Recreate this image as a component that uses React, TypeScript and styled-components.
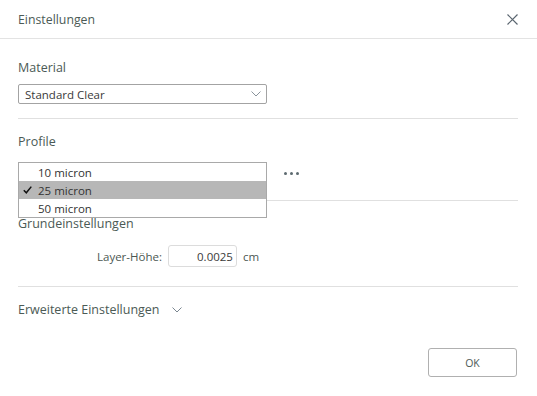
import React, { useState } from 'react';
import styled, { createGlobalStyle } from 'styled-components';

const GlobalStyle = createGlobalStyle`
    html, body {
        margin: 0;
        padding: 0;
        background: #fff;
    }
    body {
        font-family: "Open Sans", "Noto Sans", sans-serif;
        color: #4a5752;
    }
`;

const Dialog = styled.div`
    width: 537px;
    height: 396px;
    background: #fff;
    display: flex;
    flex-direction: column;
`;

const Header = styled.div`
    height: 38px;
    display: flex;
    align-items: center;
    justify-content: space-between;
    padding: 0 18px;
    border-bottom: 1px solid #e3e3e3;
`;

const Title = styled.div`
    font-size: 12.3px;
    color: #4b5a55;
`;

const CloseButton = styled.button`
    border: 0;
    background: none;
    padding: 0;
    width: 14px;
    height: 14px;
    display: flex;
    align-items: center;
    justify-content: center;
    cursor: pointer;
`;

const Body = styled.div`
    padding: 0 19px 0 18px;
    display: flex;
    flex-direction: column;
`;

const Section = styled.div<{ $top: number; $bottom: number; $last?: boolean }>`
    padding-top: ${p => p.$top}px;
    padding-bottom: ${p => p.$bottom}px;
    border-bottom: ${p => (p.$last ? 'none' : '1px solid #e0e0e0')};
`;

const Label = styled.div<{ $gap?: number }>`
    font-size: 12.5px;
    line-height: 16px;
    color: #4b5a55;
    margin-bottom: ${p => p.$gap ?? 0}px;
`;

const SelectRow = styled.div`
    display: flex;
    align-items: center;
    gap: 16px;
    position: relative;
`;

const SelectBox = styled.div`
    width: 249px;
    height: 20px;
    box-sizing: border-box;
    border: 1px solid #a3a3a3;
    border-radius: 2px;
    display: flex;
    align-items: center;
    justify-content: space-between;
    padding: 0 5px 0 6px;
    font-size: 11.5px;
    color: #3a3a3a;
`;

const Dots = styled.div`
    display: flex;
    gap: 3px;
    padding-left: 1px;

    span {
        width: 3px;
        height: 3px;
        border-radius: 50%;
        background: #5d6a70;
    }
`;

const Popup = styled.ul`
    position: absolute;
    left: 0;
    top: -1px;
    width: 249px;
    box-sizing: border-box;
    margin: 0;
    padding: 0;
    list-style: none;
    background: #fff;
    border: 1px solid #a9a9a9;
    z-index: 2;
`;

const Option = styled.li<{ $selected?: boolean }>`
    height: 18px;
    display: flex;
    align-items: center;
    position: relative;
    padding-left: 19px;
    font-size: 11.5px;
    color: #333;
    background: ${p => (p.$selected ? '#b7b7b7' : 'transparent')};
`;

const Check = styled.svg`
    position: absolute;
    left: 4px;
    top: 5px;
`;

const FieldRow = styled.div`
    display: flex;
    align-items: center;
    padding-left: 79px;
    gap: 6px;
`;

const FieldLabel = styled.span`
    font-size: 11.5px;
    color: #4b5752;
`;

const NumberInput = styled.div`
    width: 69px;
    height: 22px;
    box-sizing: border-box;
    border: 1px solid #dcdcdc;
    border-radius: 3px;
    display: flex;
    align-items: center;
    justify-content: flex-end;
    padding-right: 3px;
    font-size: 11.5px;
    color: #3a3a3a;
`;

const Unit = styled.span`
    font-size: 11.5px;
    color: #4b5752;
`;

const Toggle = styled.div`
    display: flex;
    align-items: center;
    gap: 12px;
    font-size: 12.5px;
    line-height: 16px;
    color: #4b5a55;
`;

const Footer = styled.div`
    display: flex;
    justify-content: flex-end;
    padding: 30px 20px 0 0;
`;

const OkButton = styled.button`
    width: 89px;
    height: 29px;
    border: 1px solid #b0b0b0;
    border-radius: 3px;
    background: #fff;
    font-family: "Open Sans", "Noto Sans", sans-serif;
    font-size: 10.5px;
    color: #4b5a55;
    cursor: pointer;
`;

const Chevron = ({ color = '#7a8690' }: { color?: string }) => (
    <svg width="10" height="6" viewBox="0 0 10 6">
        <path d="M0.5 0.5 L5 5 L9.5 0.5" fill="none" stroke={color} strokeWidth="1" />
    </svg>
);

const profiles = ['10 micron', '25 micron', '50 micron'];

const App: React.FC = () => {
    const [profile] = useState<string>('25 micron');
    const [open] = useState<boolean>(true);

    return (
        <Dialog>
            <GlobalStyle />
            <Header>
                <Title>Einstellungen</Title>
                <CloseButton aria-label="Schließen">
                    <svg width="11" height="11" viewBox="0 0 11 11">
                        <path d="M0.5 0.5 L10.5 10.5 M10.5 0.5 L0.5 10.5" stroke="#5b6670" strokeWidth="1.2" />
                    </svg>
                </CloseButton>
            </Header>

            <Body>
                <Section $top={21} $bottom={14}>
                    <Label $gap={8}>Material</Label>
                    <SelectBox>
                        <span>Standard Clear</span>
                        <Chevron color="#8a949c" />
                    </SelectBox>
                </Section>

                <Section $top={15} $bottom={17}>
                    <Label $gap={13}>Profile</Label>
                    <SelectRow>
                        {/* the open list covers the closed select */}
                        <SelectBox>{!open && <span>{profile}</span>}</SelectBox>
                        <Dots><span /><span /><span /></Dots>
                        {open && (
                            <Popup>
                                {profiles.map(p => (
                                    <Option key={p} $selected={p === profile}>
                                        {p === profile && (
                                            <Check width="9" height="8" viewBox="0 0 9 8">
                                                <path d="M0.8 4.2 L3.3 6.8 L8.3 0.6" fill="none" stroke="#111" strokeWidth="1.5" />
                                            </Check>
                                        )}
                                        {p}
                                    </Option>
                                ))}
                            </Popup>
                        )}
                    </SelectRow>
                </Section>

                <Section $top={15} $bottom={19}>
                    <Label $gap={13}>Grundeinstellungen</Label>
                    <FieldRow>
                        <FieldLabel>Layer-Höhe:</FieldLabel>
                        <NumberInput>0.0025</NumberInput>
                        <Unit>cm</Unit>
                    </FieldRow>
                </Section>

                <Section $top={15} $bottom={0} $last>
                    <Toggle>
                        Erweiterte Einstellungen
                        <Chevron />
                    </Toggle>
                </Section>
            </Body>

            <Footer>
                <OkButton>OK</OkButton>
            </Footer>
        </Dialog>
    );
};

export default App;
